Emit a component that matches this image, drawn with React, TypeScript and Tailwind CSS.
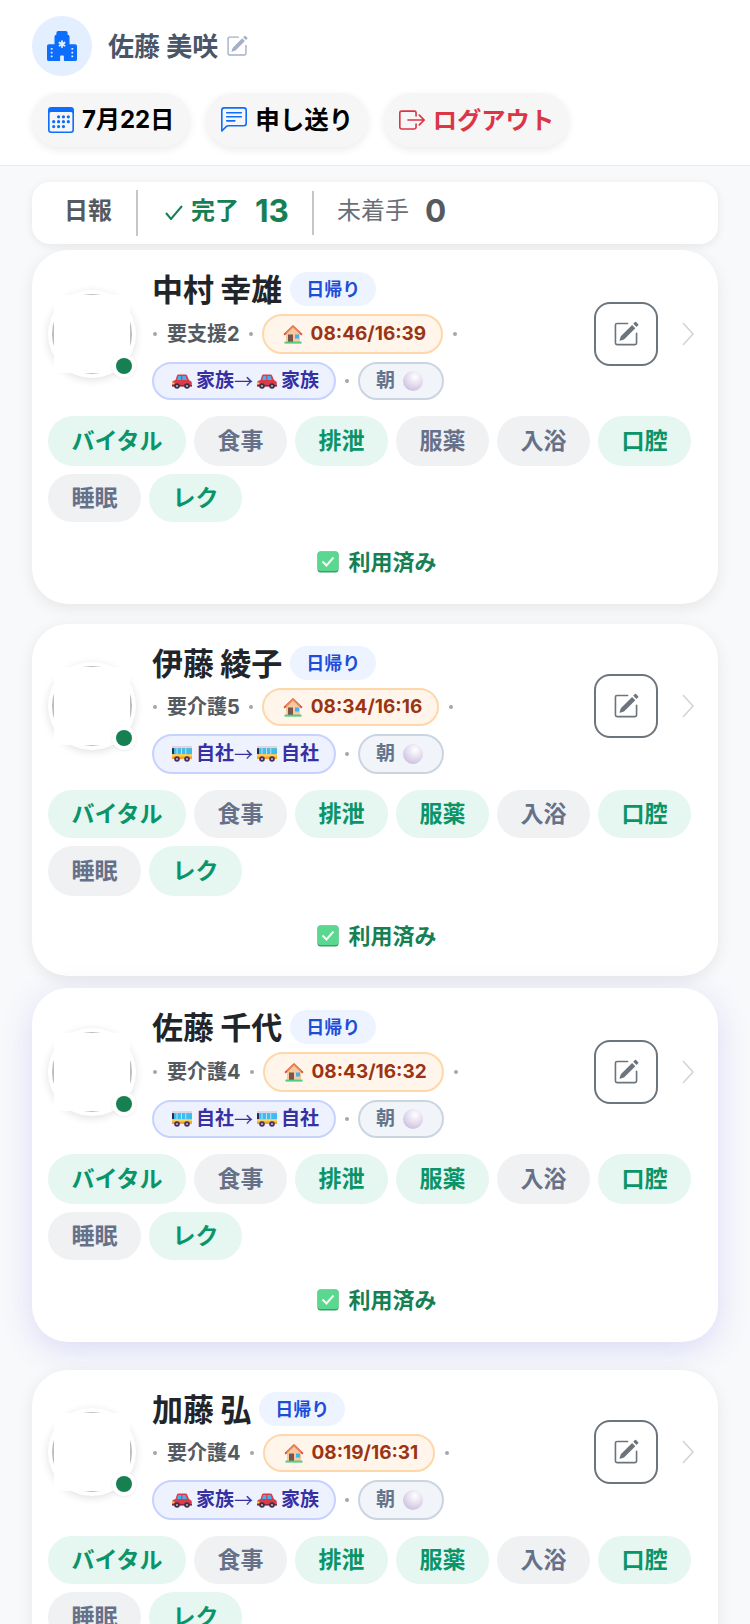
import React from "react";
import { BsHospitalFill, BsPencilSquare, BsCalendar3, BsChatLeftText, BsBoxArrowRight } from "react-icons/bs";

const FONT = "font-['Inter','Noto_Sans_CJK_JP',sans-serif]";

function House() {
  return (
    <svg width="20" height="20" viewBox="0 0 20 20" className="shrink-0">
      <path d="M3 9.5 10 3l7 6.5V18H3z" fill="#f6c9a0" />
      <path d="M10 1 .5 10l1.2 1.4L10 3.6l8.3 7.8 1.2-1.4z" fill="#d9503c" />
      <path d="M10 3.6 3 10V8.6L10 2l7 6.6V10z" fill="#f09a5a" />
      <rect x="5" y="10.5" width="5" height="7.5" fill="#7a5548" />
      <rect x="12" y="10.5" width="4" height="4" fill="#3fb3f2" />
      <rect x="1.5" y="17.6" width="17" height="2" fill="#4fce82" />
    </svg>
  );
}

function Car() {
  return (
    <svg width="20" height="15" viewBox="0 0 20 15" className="shrink-0">
      <path d="M5 1.5Q5.3.5 6.5.5h7q1.2 0 1.6 1L17 6l2 1.2q.8.5.8 1.5v3.3H.2V8.5Q.2 7 2 6.6L3.5 6z" fill="#dc3a4a" />
      <path d="M6.3 2h2.9v4H5zM10.4 2h3l1.6 4h-4.6z" fill="#3db4ee" />
      <rect x="0" y="8.4" width="2.4" height="1.8" fill="#f7c948" />
      <rect x="0" y="11" width="20" height="1.6" fill="#8e2438" />
      <circle cx="5" cy="12" r="2.8" fill="#3a3148" />
      <circle cx="5" cy="12" r="1.1" fill="#b8b4c4" />
      <circle cx="15" cy="12" r="2.8" fill="#3a3148" />
      <circle cx="15" cy="12" r="1.1" fill="#b8b4c4" />
    </svg>
  );
}

function Bus() {
  return (
    <svg width="20" height="16" viewBox="0 0 20 16" className="shrink-0">
      <path d="M1.5 0h17Q20 0 20 1.5V13H0V1.5Q0 0 1.5 0z" fill="#f6a42c" />
      <path d="M1.5 0h17Q20 0 20 1.5V2.2H0V1.5Q0 0 1.5 0z" fill="#ddd6e4" />
      <rect x="0" y="2.2" width="20" height="6" fill="#3dbcf0" />
      <path d="M4.6 2.2h.8v6h-.8zM9 2.2h.8v6H9zM13.4 2.2h.8v6h-.8z" fill="#d8f0fb" />
      <rect x="0" y="2.2" width="2" height="6" fill="#2c2a4a" />
      <rect x="0" y="8.2" width="20" height="2.2" fill="#fbd25a" />
      <circle cx="5" cy="13" r="2.8" fill="#4a2f5e" />
      <circle cx="5" cy="13" r="1" fill="#c6bcd0" />
      <circle cx="15" cy="13" r="2.8" fill="#4a2f5e" />
      <circle cx="15" cy="13" r="1" fill="#c6bcd0" />
    </svg>
  );
}

function CheckBox() {
  return (
    <svg width="22" height="22" viewBox="0 0 22 22" className="shrink-0">
      <rect x="0.5" y="0.5" width="21" height="21" rx="3" fill="#3f9c68" />
      <rect x="0.5" y="0.5" width="21" height="19.5" rx="3" fill="#5bd88f" />
      <path d="M5.5 10.5l4 4 7-8" fill="none" stroke="#f2fbf5" strokeWidth="2" />
    </svg>
  );
}

function Dot({ className = "" }: { className?: string }) {
  return <span className={`w-[4px] h-[4px] rounded-full bg-[#a3a7ad] shrink-0 ${className}`} />;
}

function Chip({ label, on, h }: { label: string; on: boolean; h: string }) {
  return (
    <span
      className={`px-[23.5px] rounded-full flex items-center text-[23px] font-bold leading-none ${h} ${
        on ? "bg-[#e6f6f0] text-[#0a9469]" : "bg-[#f0f1f3] text-[#667189]"
      }`}
    >
      {label}
    </span>
  );
}

type P = {
  name: string;
  level: string;
  time: string;
  ride: string;
  bus: boolean;
  done: string[];
  alt: boolean;
  cls: string;
};

const CHIPS = ["バイタル", "食事", "排泄", "服薬", "入浴", "口腔", "睡眠", "レク"];

function Card({ p }: { p: P }) {
  const Vehicle = p.bus ? Bus : Car;
  return (
    <div className={`bg-white rounded-[36px] px-[16px] pt-[22px] ${p.alt ? "pb-[25px]" : "pb-[27px]"} ${p.cls}`}>
      <div className="flex items-start">
        <div className={`relative w-[88px] h-[88px] rounded-full bg-white shadow-[0_2px_8px_rgba(0,0,0,0.12)] shrink-0 flex items-center justify-center ${p.alt ? "mt-[16px]" : "mt-[18px]"}`}>
          <div className="w-[80px] h-[80px] rounded-full border-2 border-[#bdbdbd] flex items-center justify-center">
            <div className="w-[76px] h-[78px] bg-white" />
          </div>
          <span className="absolute right-0 bottom-0 w-[24px] h-[24px] rounded-full bg-white flex items-center justify-center shadow-[0_1px_3px_rgba(0,0,0,0.08)]">
            <span className="w-[16px] h-[16px] rounded-full bg-[#168053]" />
          </span>
        </div>
        <div className="ml-[16px] flex-1 min-w-0 flex flex-col">
          <div className="flex items-center gap-[8px] h-[38px]">
            <span className="text-[31px] font-bold text-[#212529] leading-[38px] [word-spacing:-1px] mb-[2px]">{p.name}</span>
            <span className="h-[34px] px-[16px] rounded-full bg-[#edf4ff] text-[#1d4ed8] text-[18px] font-bold flex items-center mb-[4px]">日帰り</span>
          </div>
          <div className={`flex items-center mt-[4px] ${p.alt ? "h-[38px]" : "h-[40px]"}`}>
            <Dot className="ml-[1px]" />
            <span className="ml-[10px] text-[20px] font-bold text-[#555a61]">{p.level}</span>
            <Dot className="ml-[9px]" />
            <span className="ml-[9px] h-full pl-[19px] pr-[15px] rounded-full bg-[#fff5eb] border-2 border-[#fed7aa] text-[#9a3412] text-[19px] font-bold flex items-center gap-[8px]">
              <House />
              <span>{p.time}</span>
            </span>
            <Dot className="ml-[10px]" />
          </div>
          <div className="flex items-center mt-[8px]">
            <span className={`${p.alt ? "h-[40px]" : "h-[38px]"} pl-[18px] pr-[15px] rounded-full bg-[#eef2ff] border-2 border-[#c7d2fe] text-[#3730a3] text-[19px] font-bold flex items-center`}>
              <Vehicle />
              <span className="ml-[4px]">{p.ride}</span>
              <span className="font-['Noto_Sans_CJK_JP'] font-normal">→</span>
              <span className="ml-[4px]"><Vehicle /></span>
              <span className="ml-[4px]">{p.ride}</span>
            </span>
            <Dot className="ml-[9px]" />
            <span className={`ml-[9px] ${p.alt ? "h-[40px]" : "h-[38px]"} pl-[16px] pr-[19px] rounded-full bg-[#f1f5f9] border-2 border-[#cbd5e1] text-[#64748b] text-[19px] font-bold flex items-center gap-[8px]`}>
              朝
              <span className="w-[20px] h-[20px] rounded-full bg-[radial-gradient(circle_at_60%_30%,#ffffff,#e4dcee_45%,#bfaeda)]" />
            </span>
          </div>
        </div>
        <button className={`w-[64px] h-[64px] rounded-[16px] border-2 border-[#6c757d] flex items-center justify-center shrink-0 ${p.alt ? "mt-[28px]" : "mt-[30px]"}`}>
          <BsPencilSquare size={26} color="#6c757d" />
        </button>
        <svg width="14" height="24" viewBox="0 0 14 24" fill="none" stroke="#d4d4d4" strokeWidth="1.6" className={`ml-[23px] mr-[7px] shrink-0 ${p.alt ? "mt-[48px]" : "mt-[50px]"}`}>
          <path d="M2 1l10 11L2 23" />
        </svg>
      </div>
      <div className="flex flex-wrap gap-[8px] mt-[16px]">
        {CHIPS.map((c, i) => (
          <Chip key={c} label={c} on={p.done.includes(c)} h={(i < 6) !== p.alt ? "h-[50px]" : "h-[48px]"} />
        ))}
      </div>
      <div className="flex items-center justify-center gap-[9px] pl-[4px] text-[22px] leading-[30px] font-bold text-[#168053] mt-[25px]">
        <CheckBox />
        <span>利用済み</span>
      </div>
    </div>
  );
}

const SHADOW = "shadow-[0_4px_16px_rgba(0,0,0,0.08)]";

const PEOPLE: P[] = [
  { name: "中村 幸雄", level: "要支援2", time: "08:46/16:39", ride: "家族", bus: false, done: ["バイタル", "排泄", "口腔", "レク"], alt: false, cls: `${SHADOW} mt-[6px]` },
  { name: "伊藤 綾子", level: "要介護5", time: "08:34/16:16", ride: "自社", bus: true, done: ["バイタル", "排泄", "服薬", "口腔", "レク"], alt: true, cls: `${SHADOW} mt-[20px]` },
  { name: "佐藤 千代", level: "要介護4", time: "08:43/16:32", ride: "自社", bus: true, done: ["バイタル", "排泄", "服薬", "口腔", "レク"], alt: false, cls: "shadow-[0_8px_32px_rgba(79,70,229,0.17)] mt-[12px]" },
  { name: "加藤 弘", level: "要介護4", time: "08:19/16:31", ride: "家族", bus: false, done: ["バイタル", "排泄", "服薬", "口腔", "レク"], alt: true, cls: `${SHADOW} mt-[28px]` },
];

const BTN = "h-[54px] rounded-full bg-[#f6f6f6] shadow-[0_3px_8px_rgba(0,0,0,0.08)] flex items-center gap-[8px] font-bold";

export default function App() {
  return (
    <div className={`${FONT} w-[750px] h-[1624px] overflow-hidden bg-[#f8f9fb]`}>
      <header className="bg-white border-b border-[#e9ecef] h-[166px] px-[32px] pt-[16px]">
        <div className="flex items-center h-[60px]">
          <div className="w-[60px] h-[60px] rounded-full bg-[#e3eeff] flex items-center justify-center">
            <BsHospitalFill size={30} color="#0d6efd" />
          </div>
          <span className="ml-[16px] text-[26px] font-bold text-[#4a5568]">佐藤 美咲</span>
          <span className="ml-[8px]"><BsPencilSquare size={22} color="#a3b0c6" /></span>
        </div>
        <div className="flex gap-[16px] mt-[17px]">
          <button className={`${BTN} px-[16px] text-[24px] text-black`}>
            <BsCalendar3 size={26} color="#0d6efd" />7月22日
          </button>
          <button className={`${BTN} px-[15px] text-[24.5px] text-black`}>
            <BsChatLeftText size={26} color="#0d6efd" />申し送り
          </button>
          <button className={`${BTN} px-[14.5px] text-[24.3px] text-[#dc3545]`}>
            <BsBoxArrowRight size={26} color="#dc3545" />ログアウト
          </button>
        </div>
      </header>
      <main className="px-[32px] pt-[16px]">
        <div className="h-[62px] bg-white rounded-[18px] shadow-[0_2px_8px_rgba(0,0,0,0.08)] flex items-center">
          <span className="ml-[32px] mb-[4px] text-[24px] font-semibold text-[#555a61]">日報</span>
          <span className="ml-[24px] w-[2px] h-[46px] bg-[#c4c6ca]" />
          <svg width="18" height="15" viewBox="0 0 18 15" fill="none" stroke="#168053" strokeWidth="2" className="ml-[27px] mb-[2px]">
            <path d="M1 8l5 6L17 1" />
          </svg>
          <span className="ml-[8px] mb-[4px] text-[24px] font-semibold text-[#168053]">完了</span>
          <span className="ml-[16px] mb-[4px] text-[31.5px] font-bold text-[#168053]">13</span>
          <span className="ml-[23px] w-[2px] h-[44px] bg-[#c4c6ca]" />
          <span className="ml-[23px] mb-[4px] text-[24px] text-[#6b6f75]">未着手</span>
          <span className="ml-[16px] mb-[4px] text-[31.5px] font-bold text-[#555a61]">0</span>
        </div>
        {PEOPLE.map((p) => (
          <Card key={p.name} p={p} />
        ))}
      </main>
    </div>
  );
}
